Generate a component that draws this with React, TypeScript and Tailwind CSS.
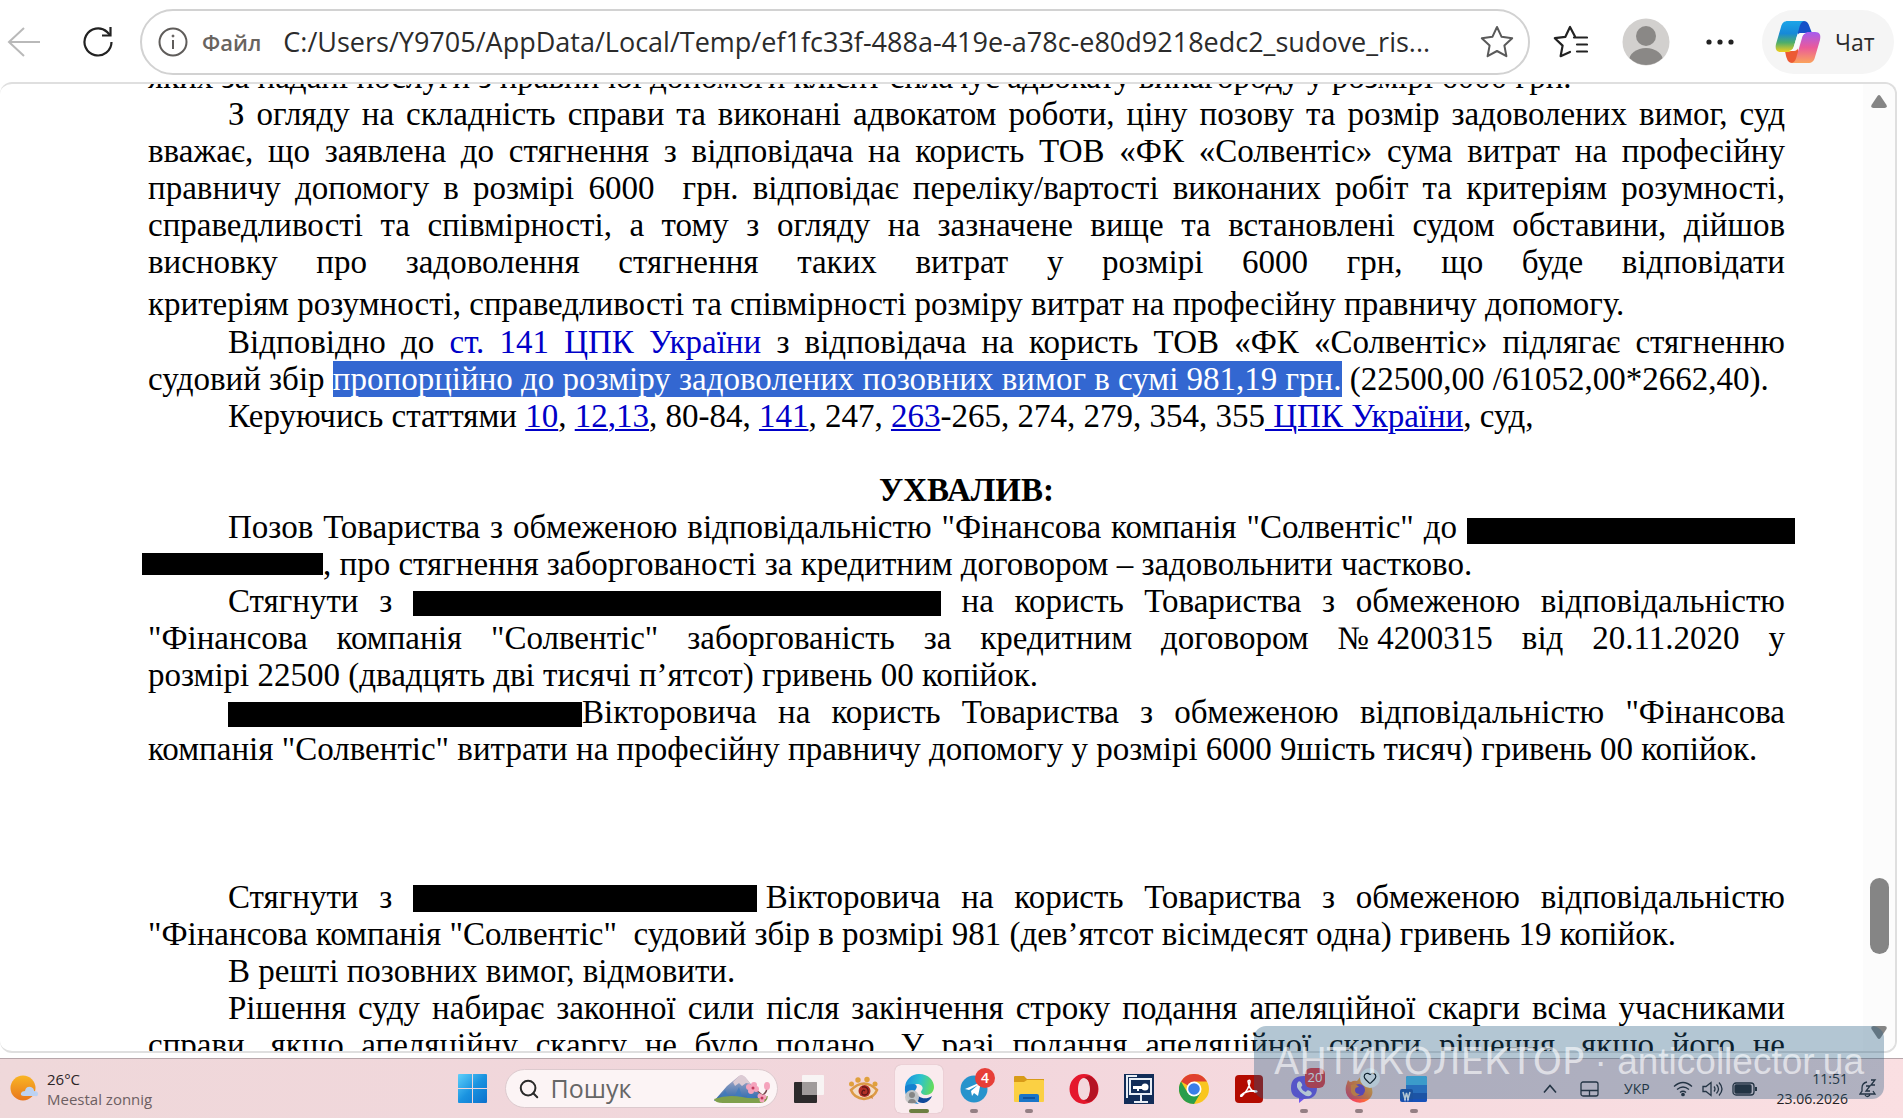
import type { ReactNode } from "react";
import { Heart, Search } from "lucide-react";

interface LineProps {
  children: ReactNode;
  indent?: boolean;
  justify?: boolean;
}

// One line of the court decision
function Line({ children, indent = false, justify = true }: LineProps) {
  return (
    <span
      className={`block whitespace-nowrap ${indent ? "pl-[80px]" : ""} ${
        justify ? "[text-align-last:justify]" : ""
      }`}
    >
      {children}
    </span>
  );
}

function Redacted({ className }: { className: string }) {
  return <span className={`inline-block bg-black ${className}`} />;
}

function DocLink({ children }: { children: ReactNode }) {
  return (
    <a href="#" className="text-[#0000c8] underline decoration-2 underline-offset-2">
      {children}
    </a>
  );
}

function CopilotLogo() {
  return (
    <svg className="h-[44px] w-[46px]" viewBox="0 0 46 44">
      <defs>
        <linearGradient id="cpA" x1="0" y1="0" x2="0" y2="1">
          <stop offset="0" stopColor="#1ba5e8" />
          <stop offset="0.4" stopColor="#1689d8" />
          <stop offset="0.7" stopColor="#4fae6a" />
          <stop offset="1" stopColor="#f2cf1e" />
        </linearGradient>
        <linearGradient id="cpB" x1="0" y1="0" x2="0" y2="1">
          <stop offset="0" stopColor="#a45cf0" />
          <stop offset="0.5" stopColor="#ea5a9a" />
          <stop offset="1" stopColor="#fba35c" />
        </linearGradient>
      </defs>
      <path d="M22 1h7c4 0 5 4 6 7l2 5h-6c-4 0-5 2-6 5L20 8z" fill="#1550c8" />
      <path d="M24 43h-7c-4 0-5-4-6-7l-1-5h5c4 0 5-2 6-5l4 8z" fill="#ec5a34" />
      <path d="M13 1h17c-4 0-5 4-6 8l-5 17c-1 4-3 6-7 6H6c-5 0-6-3-5-8L6 7c1-4 3-6 7-6z" fill="url(#cpA)" />
      <path d="M33 43H16c4 0 5-4 6-8l5-17c1-4 3-6 7-6h6c5 0 6 3 5 8l-5 17c-1 4-3 6-7 6z" fill="url(#cpB)" />
      <path d="M25 13h6c-3 1-4 3-5 6l-3 9c-1 2-2 3-4 3h-5c3-1 4-2 5-5l3-10c1-2 2-3 3-3z" fill="#fafafa" />
    </svg>
  );
}

function BrowserBar() {
  return (
    <header className="flex h-[82px] shrink-0 items-center bg-white pt-[2px] pr-[9px] pl-[7px] font-['Open_Sans','Noto_Sans',sans-serif]">
      <button type="button" aria-label="Назад" className="mr-[42px]">
        <svg className="h-[34px] w-[34px]" viewBox="0 0 34 34" fill="none" stroke="#b9b9b9" strokeWidth="2">
          <path d="M33 17H2M17 3 2 17l15 14" />
        </svg>
      </button>
      <button type="button" aria-label="Оновити" className="mr-[27px]">
        <svg className="h-[30px] w-[30px]" viewBox="0 0 30 30" fill="none" stroke="#222" strokeWidth="2.2">
          <path d="M28.500 15A13.500 13.500 0 1 1 24 4.900L27 8" />
          <path d="M27.500 0v8.500H19" />
        </svg>
      </button>
      <div className="flex h-[66px] flex-1 items-center rounded-full border-2 border-[#d2d2d2] pr-[14px] pl-[16px]">
        <svg className="h-[30px] w-[30px] shrink-0" viewBox="0 0 30 30" fill="none" stroke="#5f5c5a" strokeWidth="2">
          <circle cx="15" cy="15" r="13.500" />
          <path d="M15 13v9" />
          <circle cx="15" cy="9" r="1" fill="#5f5c5a" strokeWidth="1" />
        </svg>
        <label htmlFor="address" className="ml-[14px] text-[22px] font-semibold text-[#69645f]">
          Файл
        </label>
        <input
          id="address"
          readOnly
          value="C:/Users/Y9705/AppData/Local/Temp/ef1fc33f-488a-419e-a78c-e80d9218edc2_sudove_ris..."
          className="ml-[22px] min-w-0 flex-1 bg-transparent text-[27px] text-[#2b2b2b] outline-none"
        />
        <button type="button" aria-label="Додати до вибраного">
          <svg className="h-[34px] w-[34px]" viewBox="0 0 34 34" fill="none" stroke="#5a5a5a" strokeWidth="2" strokeLinejoin="round">
            <path d="m17 2 4.600 9.800 10.600 1.400-7.800 7.400 2 10.600L17 26l-9.400 5.200 2-10.600-7.800-7.400 10.600-1.400z" />
          </svg>
        </button>
      </div>
      <button type="button" aria-label="Вибране" className="ml-[23px]">
        <svg className="h-[34px] w-[35px]" viewBox="0 0 35 34" fill="none" stroke="#222" strokeWidth="2.2" strokeLinejoin="round" strokeLinecap="round">
          <path d="M22 11.500 17 2l-4.600 9.800L1.800 13.200l7.800 7.400-2 10.600L17 27" />
          <path d="M21 12.500h13M24 19.500h10M24 26.500h10" />
        </svg>
      </button>
      <button type="button" aria-label="Профіль" className="ml-[34px]">
        <svg className="h-[48px] w-[48px]" viewBox="0 0 48 48">
          <clipPath id="avatar">
            <circle cx="24" cy="24" r="23" />
          </clipPath>
          <circle cx="24" cy="24" r="23.500" fill="#d2d0ce" />
          <g clipPath="url(#avatar)" fill="#8a8886">
            <circle cx="24" cy="18" r="10" />
            <ellipse cx="24" cy="43" rx="17" ry="13" />
          </g>
        </svg>
      </button>
      <button type="button" aria-label="Меню" className="ml-[36px]">
        <svg className="h-[6px] w-[28px]" viewBox="0 0 28 6" fill="#222">
          <circle cx="3" cy="3" r="2.600" />
          <circle cx="14" cy="3" r="2.600" />
          <circle cx="25" cy="3" r="2.600" />
        </svg>
      </button>
      <button type="button" className="ml-[28px] flex h-[64px] w-[132px] items-center gap-[14px] rounded-full bg-[#f5f5f5] pl-[13px] text-[23px] text-[#2b2b2b]">
        <CopilotLogo />
        Чат
      </button>
    </header>
  );
}

function Decision() {
  return (
    <article className="-mt-[25px] min-w-0 flex-1 pr-[78px] pl-[148px] font-['Liberation_Serif',serif] text-[33px] leading-[37px] text-black">
      <p>
        <Line justify={false}>
          яких за надані послуги з правничої допомоги клієнт сплачує адвокату винагороду у розмірі 6000 грн.
        </Line>
      </p>
      <p>
        <Line indent>З огляду на складність справи та виконані адвокатом роботи, ціну позову та розмір задоволених вимог, суд</Line>
        <Line>вважає, що заявлена до стягнення з відповідача на користь ТОВ «ФК «Солвентіс» сума витрат на професійну</Line>
        <Line>правничу допомогу в розмірі 6000&nbsp; грн. відповідає переліку/вартості виконаних робіт та критеріям розумності,</Line>
        <Line>справедливості та співмірності, а тому з огляду на зазначене вище та встановлені судом обставини, дійшов</Line>
        <Line>висновку про задоволення стягнення таких витрат у розмірі 6000 грн, що буде відповідати</Line>
      </p>
      <p className="mt-[5px] mb-px">
        <Line justify={false}>критеріям розумності, справедливості та співмірності розміру витрат на професійну правничу допомогу.</Line>
      </p>
      <p>
        <Line indent>
          Відповідно до{" "}
          <a href="#" className="text-[#0000c8]">
            ст. 141 ЦПК України
          </a>{" "}
          з відповідача на користь ТОВ «ФК «Солвентіс» підлягає стягненню
        </Line>
        <Line justify={false}>
          судовий збір{" "}
          <mark className="bg-[#3367d1] text-white">
            пропорційно до розміру задоволених позовних вимог в сумі 981,19 грн.
          </mark>{" "}
          (22500,00 /61052,00*2662,40).
        </Line>
      </p>
      <p>
        <Line indent justify={false}>
          Керуючись статтями <DocLink>10</DocLink>, <DocLink>12,13</DocLink>, 80-84, <DocLink>141</DocLink>, 247,{" "}
          <DocLink>263</DocLink>-265, 274, 279, 354, 355<DocLink> ЦПК України</DocLink>, суд,
        </Line>
      </p>
      <h1 className="mt-[37px] text-center font-bold">УХВАЛИВ:</h1>
      <p>
        <Line indent>
          Позов Товариства з обмеженою відповідальністю "Фінансова компанія "Солвентіс" до{" "}
          <Redacted className="-mr-[10px] h-[26px] w-[328px] align-[-6px]" />
        </Line>
        <Line justify={false}>
          <Redacted className="-ml-[6px] h-[22px] w-[181px]" />, про стягнення заборгованості за кредитним договором – задовольнити частково.
        </Line>
      </p>
      <p>
        <Line indent>
          Стягнути з <Redacted className="h-[25px] w-[528px] align-[-4px]" /> на користь Товариства з обмеженою відповідальністю
        </Line>
        <Line>
          "Фінансова компанія "Солвентіс" заборгованість за кредитним договором{" "}
          <span className="inline-block">№ 4200315</span> від 20.11.2020 у
        </Line>
        <Line justify={false}>розмірі 22500 (двадцять дві тисячі п’ятсот) гривень 00 копійок.</Line>
      </p>
      <p>
        <Line indent>
          <Redacted className="h-[25px] w-[354px] align-[-4px]" />
          Вікторовича на користь Товариства з обмеженою відповідальністю "Фінансова
        </Line>
        <Line justify={false}>
          компанія "Солвентіс" витрати на професійну правничу допомогу у розмірі 6000 9шість тисяч) гривень 00 копійок.
        </Line>
      </p>
      <p className="mt-[111px]">
        <Line indent>
          Стягнути з <Redacted className="-mr-[12px] h-[27px] w-[344px] align-[-4px]" /> Вікторовича на користь Товариства з обмеженою відповідальністю
        </Line>
        <Line justify={false}>
          "Фінансова компанія "Солвентіс"&nbsp; судовий збір в розмірі 981 (дев’ятсот вісімдесят одна) гривень 19 копійок.
        </Line>
      </p>
      <p>
        <Line indent justify={false}>В решті позовних вимог, відмовити.</Line>
      </p>
      <p>
        <Line indent>Рішення суду набирає законної сили після закінчення строку подання апеляційної скарги всіма учасниками</Line>
        <Line>справи, якщо апеляційну скаргу не було подано. У разі подання апеляційної скарги рішення, якщо його не</Line>
      </p>
    </article>
  );
}

function ScrollTrack() {
  return (
    <div className="flex w-[32px] shrink-0 flex-col items-center bg-[#fcfcfc] pt-[11px] pb-[12px]">
      <svg className="h-[13px] w-[16px]" viewBox="0 0 16 13" fill="#858585">
        <path d="M6.500 1q1.500-2 3 0l6 9q1 3-2 3h-11q-3 0-2-3z" />
      </svg>
      <div className="flex min-h-0 w-full flex-1 flex-col items-center">
        <div className="grow-[771]" />
        <div className="h-[76px] w-[19px] rounded-full bg-[#858585]" />
        <div className="grow-[72]" />
      </div>
      <svg className="h-[13px] w-[16px]" viewBox="0 0 16 13" fill="#858585">
        <path d="M6.500 12q1.500 2 3 0l6-9q1-3-2-3h-11q-3 0-2 3z" />
      </svg>
    </div>
  );
}

function WindowsLogo() {
  return (
    <svg className="h-[29px] w-[29px]" viewBox="0 0 29 29">
      <defs>
        <linearGradient id="win" x1="0" y1="0" x2="1" y2="1">
          <stop offset="0" stopColor="#5fd0fb" />
          <stop offset="0.5" stopColor="#1a93e0" />
          <stop offset="1" stopColor="#0a70cc" />
        </linearGradient>
      </defs>
      <path fill="url(#win)" d="M1 0h13v14H0V1q0-1 1-1zM15 0h13q1 0 1 1v13H15zM0 15h14v14H1q-1 0-1-1zM15 15h14v13q0 1-1 1H15z" />
    </svg>
  );
}

function MountainArt() {
  return (
    <svg className="h-[30px] w-[58px]" viewBox="0 0 58 30">
      <defs>
        <linearGradient id="mount" x1="0" y1="0" x2="0" y2="1">
          <stop offset="0" stopColor="#cfb6c4" />
          <stop offset="0.4" stopColor="#7b92bd" />
          <stop offset="1" stopColor="#2a66ab" />
        </linearGradient>
      </defs>
      <path d="M1 27 14 12 26 2q3-2 6 1l9 11 12 13z" fill="url(#mount)" />
      <path d="m20 8 6-6q3-2 6 1l6 7-5-1-4 3-3-3-4 3z" fill="#dccbd4" />
      <path d="M12 16 6 27h12zM26 13l-6 12h10zM36 13l-3 12h10z" fill="#3d7abf" opacity=".7" />
      <path d="M1 25q14-5 28-2t26-1q-1 7-8 7H10q-8 0-9-4z" fill="#7fa04c" />
      <path d="M40 14q9 6 13 11M50 21q5-4 4-10" stroke="#744449" strokeWidth="1.500" fill="none" />
      <g fill="#f5a3bc">
        <circle cx="36" cy="13" r="3" />
        <circle cx="41" cy="11" r="3" />
        <circle cx="43" cy="15" r="3" />
        <circle cx="38" cy="17" r="3" />
        <circle cx="47" cy="22" r="2.500" />
        <circle cx="51" cy="23" r="2.500" />
        <circle cx="49" cy="26" r="2.500" />
        <ellipse cx="54" cy="12" rx="3" ry="4" />
      </g>
      <circle cx="40" cy="14" r="1.500" fill="#c13b5c" />
      <circle cx="49" cy="24" r="1.500" fill="#c13b5c" />
    </svg>
  );
}

interface AppButtonProps {
  label: string;
  children: ReactNode;
  running?: boolean;
  active?: boolean;
  badge?: ReactNode;
}

function AppButton({ label, children, running = false, active = false, badge }: AppButtonProps) {
  return (
    <button type="button" aria-label={label} className="flex w-[55px] justify-center">
      <span
        className={`relative flex h-[48px] w-[48px] items-center justify-center rounded-md ${
          active ? "bg-[#faebee] shadow-[0_0_1px_#b99ca1]" : ""
        }`}
      >
        {children}
        {badge}
        {running && (
          <span
            className={`absolute bottom-0 rounded-full ${active ? "h-1 w-5 bg-[#6c7f41]" : "h-1 w-2 bg-[#947f84]"}`}
          />
        )}
      </span>
    </button>
  );
}

function TaskbarApps() {
  return (
    <>
      <AppButton label="Подання завдань">
        <svg className="h-[30px] w-[30px]" viewBox="0 0 30 30">
          <rect y="8" width="23" height="21" rx="1" fill="#2d2b2c" />
          <rect x="8" y="1" width="22" height="20" rx="1" fill="#f8f4f4" />
          <path d="M8 8h15v13H8z" fill="#a09b9b" />
        </svg>
      </AppButton>
      <AppButton label="Перегляд зображень">
        <svg className="h-[26px] w-[30px]" viewBox="0 0 30 26">
          <path d="M2 14q13-13 26 0-3 8-13 9Q5 22 2 14z" fill="#f3ddc8" stroke="#dc9a45" strokeWidth="2.500" />
          <circle cx="15.500" cy="15" r="6" fill="#b33026" />
          <path d="M16 15q-2-2-3 1t3 3q4-1 3-5t-6-3" stroke="#5c1616" fill="none" strokeWidth="1.300" />
          <g fill="#e0a03c">
            <circle cx="2.500" cy="8" r="2.500" />
            <circle cx="9" cy="4" r="2.700" />
            <circle cx="18" cy="3.500" r="2.700" />
            <circle cx="26" cy="8" r="2.500" />
          </g>
          <path d="m20 21 3-2 1 4z" fill="#d48a38" />
        </svg>
      </AppButton>
      <AppButton label="Microsoft Edge" active running>
        <svg className="h-[30px] w-[30px]" viewBox="0 0 30 30">
          <defs>
            <linearGradient id="edge" x1="0" y1=".3" x2="1" y2=".5">
              <stop offset="0" stopColor="#1b8fe0" />
              <stop offset=".5" stopColor="#2cc2cf" />
              <stop offset="1" stopColor="#65dc59" />
            </linearGradient>
          </defs>
          <path d="M1 13A14 14 0 0 1 15 0c10 0 15 7 15 13 0 5-4 8-8 8-5 0-6-3-4-5 2-3-1-6-5-6-5 0-11 4-12 3z" fill="url(#edge)" />
          <path d="M1 13c-1 8 4 17 14 17-5-3-7-10-3-15 2-3 0-5-3-5-4 0-7 1-8 3z" fill="#1680cf" />
          <path d="M11 17c-2 7 3 13 9 12 4-1 7-4 8-7-6 4-14 3-17-5z" fill="#114a9a" />
          <circle cx="8" cy="23" r="7" fill="#c8c8c8" opacity=".95" />
          <circle cx="8" cy="21" r="3" fill="#858585" />
          <path d="M4 29q0-4 4-4t4 4z" fill="#858585" />
        </svg>
      </AppButton>
      <AppButton
        label="Telegram"
        running
        badge={
          <span className="absolute top-[3px] left-[25px] flex h-5 w-5 items-center justify-center rounded-full bg-[#e73e38] text-sm font-semibold text-white">
            4
          </span>
        }
      >
        <svg className="h-[28px] w-[28px]" viewBox="0 0 28 28">
          <circle cx="14" cy="14" r="13.500" fill="#2793cc" />
          <path d="m5 14 16-7-3 14-4-3-2 3-1-5 7-6-9 5z" fill="#fff" />
        </svg>
      </AppButton>
      <AppButton label="Провідник" running>
        <svg className="h-[28px] w-[30px]" viewBox="0 0 30 28">
          <path d="M0 2q0-1 1-1h9l3 3h17v7H0z" fill="#d89b18" />
          <path d="M0 7h10l3-2h16q1 0 1 1v20q0 1-1 1H1q-1 0-1-1z" fill="#fbd043" />
          <path d="M5 27v-6q0-2 2-2h16q2 0 2 2v6z" fill="#1a75c8" />
          <path d="M9 23h12" stroke="#0c4a91" strokeWidth="1.500" />
        </svg>
      </AppButton>
      <AppButton label="Opera">
        <svg className="h-[30px] w-[30px]" viewBox="0 0 30 30">
          <path fillRule="evenodd" fill="#e5182d" d="M15 0a14.500 15 0 1 0 0 30 14.500 15 0 1 0 0-30zm0 4c4 0 6 5 6 11s-2 11-6 11-6-5-6-11 2-11 6-11z" />
          <path d="M15 4q5-4 9 0 5 4 5 11t-5 11q-4 4-9 0c4 0 6-5 6-11S19 4 15 4z" fill="#b51424" />
        </svg>
      </AppButton>
      <AppButton label="Ключ">
        <svg className="h-[30px] w-[30px]" viewBox="0 0 30 30">
          <path d="M0 0h30v30H0z" fill="#122d58" />
          <path d="M3 24V2h10M6 5h21v15H6zM10 28h14M17 21v7" fill="none" stroke="#e8eef5" strokeWidth="2" />
          <circle cx="21" cy="13" r="3.500" fill="#fff" />
          <path d="M9 12h10v3h-4v2h-2v-2H9z" fill="#fff" />
        </svg>
      </AppButton>
      <AppButton label="Google Chrome">
        <svg className="h-[30px] w-[30px]" viewBox="0 0 30 30">
          <circle cx="15" cy="15" r="15" fill="#f9c61f" />
          <path d="M15 15 2 7.500A15 15 0 0 1 28 7.500H15z" fill="#e0402f" />
          <path d="M2 7.500A15 15 0 0 0 15 30l6.500-11L15 15 8.500 18.500z" fill="#2a9e4b" />
          <circle cx="15" cy="15" r="7.500" fill="#fff" />
          <circle cx="15" cy="15" r="5.800" fill="#3a7eea" />
        </svg>
      </AppButton>
      <AppButton label="Adobe Acrobat">
        <svg className="h-[28px] w-[28px]" viewBox="0 0 28 28">
          <rect width="28" height="28" rx="4" fill="#b30b00" />
          <path d="M13 6q2-2 2 1-1 7-8 14-2 1-1-1 6-5 15-4 2 1-1 1-6-2-7-11z" fill="none" stroke="#fff" strokeWidth="1.600" />
        </svg>
      </AppButton>
      <AppButton
        label="Viber"
        running
        badge={
          <span className="absolute top-[3px] left-[25px] flex h-5 w-5 items-center justify-center rounded-md bg-[#e8363c] text-[13px] text-white">
            20
          </span>
        }
      >
        <svg className="h-[28px] w-[28px]" viewBox="0 0 28 28">
          <path d="M14 1c9 0 13 4 13 12s-5 11-13 11l-5 4v-5c-6-1-8-5-8-10C1 5 5 1 14 1z" fill="#7054ee" />
          <path d="M8 7q2-2 4 2 1 2-1 3 1 4 5 5 1-3 4-1 3 2 1 4-3 3-8-1-7-5-6-10z" fill="#fff" />
        </svg>
      </AppButton>
      <AppButton
        label="Firefox"
        running
        badge={
          <span className="absolute top-[3px] left-[25px] flex h-5 w-5 items-center justify-center rounded-full bg-white text-black">
            <Heart size={14} strokeWidth={2} />
          </span>
        }
      >
        <svg className="h-[28px] w-[28px]" viewBox="0 0 28 28">
          <defs>
            <linearGradient id="fox" x1="1" y1="0" x2="0" y2="1">
              <stop offset="0" stopColor="#ffdd3c" />
              <stop offset=".5" stopColor="#ff7b2e" />
              <stop offset="1" stopColor="#e8287a" />
            </linearGradient>
          </defs>
          <path d="M3 5q1 2 3 2 3-2 6-1l4-5q4 3 6 7 3 0 4 3 4 9-3 14-7 5-15 1-9-5-7-15 1-3 2-6z" fill="url(#fox)" />
          <circle cx="14" cy="15" r="6" fill="#6d3ed2" />
          <path d="M6 10q5-2 8 2-4 0-4 3 0 4 5 4-6 5-9-2z" fill="#ff8c2b" />
        </svg>
      </AppButton>
      <AppButton label="Word" running>
        <svg className="h-[28px] w-[28px]" viewBox="0 0 28 28">
          <rect x="6" y="1" width="21" height="26" rx="2" fill="#2a79da" />
          <path d="M6 10V3q0-2 2-2h17q2 0 2 2v7z" fill="#48bdf1" />
          <path d="M6 18h21v7q0 2-2 2H8q-2 0-2-2z" fill="#1751b8" />
          <rect y="14" width="13" height="13" rx="2" fill="#174fae" />
          <path d="m3 17 2 7 1.500-6L8 24l2-7" stroke="#fff" strokeWidth="1.500" fill="none" />
        </svg>
      </AppButton>
    </>
  );
}

function Tray() {
  return (
    <div className="flex items-center justify-end pr-[26px] text-[#231f24]">
      <button type="button" aria-label="Приховані піктограми">
        <svg className="h-[10px] w-[14px]" viewBox="0 0 14 10" fill="none" stroke="currentColor" strokeWidth="1.600">
          <path d="m1 8.500 6-7 6 7" />
        </svg>
      </button>
      <button type="button" aria-label="Сенсорна панель" className="ml-[23px]">
        <svg className="h-[16px] w-[19px]" viewBox="0 0 19 16" fill="none" stroke="currentColor" strokeWidth="1.300">
          <rect x="1" y="1" width="17" height="14" rx="2" />
          <path d="M1 9.500h17M9.500 9.500V15" />
        </svg>
      </button>
      <button type="button" className="ml-[25px] text-[14px]">
        УКР
      </button>
      <button type="button" aria-label="Мережа, звук, батарея" className="ml-[23px] flex items-center">
        <svg className="h-[16px] w-[20px]" viewBox="0 0 20 16" fill="none" stroke="currentColor" strokeWidth="1.300">
          <path d="M1 5.500q9-8 18 0M4 8.500q6-5 12 0M7 11.500q3-2.500 6 0" />
          <circle cx="10" cy="13.500" r="1.200" fill="currentColor" />
        </svg>
        <svg className="ml-[9px] h-[16px] w-[21px]" viewBox="0 0 21 16" fill="none" stroke="currentColor" strokeWidth="1.300">
          <path d="M1 5.500v5h3l5 4v-13l-5 4zM12 5.500q2 2.500 0 5M14.500 3.500q4 4.500 0 9M17 1.500q6 6.500 0 13" />
        </svg>
        <svg className="ml-[9px] h-[14px] w-[26px]" viewBox="0 0 26 14" fill="none" stroke="currentColor" strokeWidth="1.300">
          <rect x="1" y="1" width="21" height="12" rx="3" />
          <rect x="3" y="3" width="16" height="8" rx="1" fill="currentColor" />
          <path d="M24 5v4" strokeWidth="2" />
        </svg>
      </button>
      <div className="ml-[19px] text-right text-[14px] leading-[20px]">
        <p>11:51</p>
        <p>23.06.2026</p>
      </div>
      <button type="button" aria-label="Сповіщення" className="ml-[11px]">
        <svg className="h-[19px] w-[18px]" viewBox="0 0 18 19" fill="none" stroke="currentColor" strokeWidth="1.300">
          <path d="M8 3Q3 4 3 9v3l-2 3h15l-2-3M6 16q2 3 5 0M12 1h4l-4 5h4M7 7h4l-4 5h4" />
        </svg>
      </button>
    </div>
  );
}

function Taskbar() {
  return (
    <footer className="grid h-[60px] shrink-0 grid-cols-[1fr_auto_1fr] items-center border-t border-[#b7a6aa] bg-linear-to-r from-[#efd8da] via-[#f2d6dc] to-[#fadfe2] font-['Open_Sans','Noto_Sans',sans-serif]">
      <button type="button" className="flex items-center gap-[9px] pl-[10px] text-left">
        <svg className="h-[28px] w-[28px]" viewBox="0 0 28 28">
          <defs>
            <linearGradient id="sun" x1="0" y1="0" x2="0" y2="1">
              <stop offset="0" stopColor="#f9b524" />
              <stop offset="1" stopColor="#e8761d" />
            </linearGradient>
          </defs>
          <circle cx="13" cy="13" r="12.500" fill="url(#sun)" />
          <path d="M14 21q-4 0-3-3 1-2 4-2 1-5 6-4 3 1 3 4 4 0 4 3t-3 2z" fill="#bcd2f2" />
        </svg>
        <span className="text-[15px] leading-[20px]">
          <span className="block text-[#2c2426]">26°C</span>
          <span className="block text-[#6d5f62]">Meestal zonnig</span>
        </span>
      </button>
      <div className="flex items-center pr-1">
        <button type="button" aria-label="Пуск" className="mr-[18px]">
          <WindowsLogo />
        </button>
        <div className="mr-1 flex h-[39px] w-[273px] items-center rounded-full border border-[#dccace] bg-[#fcf4f5] pr-[6px] pl-[12px]">
          <Search size={22} strokeWidth={2.2} className="shrink-0 text-[#2a2a2a]" />
          <input
            aria-label="Пошук"
            placeholder="Пошук"
            className="ml-[11px] min-w-0 flex-1 bg-transparent text-[25px] outline-none placeholder:text-[#666]"
          />
          <MountainArt />
        </div>
        <TaskbarApps />
      </div>
      <Tray />
    </footer>
  );
}

export default function App() {
  return (
    <div className="relative flex h-screen flex-col overflow-hidden bg-white">
      <BrowserBar />
      <main className="mr-[6px] mb-[5px] flex min-h-0 flex-1 overflow-hidden rounded-xl border-2 border-l-0 border-[#dfdfdf] bg-white">
        <Decision />
        <ScrollTrack />
      </main>
      <Taskbar />
      <div className="pointer-events-none absolute right-[19px] bottom-[19px] flex h-[73px] items-center rounded-xl bg-[#265c81]/35 px-[20px] pb-[2px] font-['Liberation_Sans',sans-serif] text-[37px] whitespace-nowrap text-white/60">
        <span className="font-['DejaVu_Sans',sans-serif]">АНТИКОЛЕКТОР</span>
        <span>&nbsp;·&nbsp;anticollector.ua</span>
      </div>
    </div>
  );
}
